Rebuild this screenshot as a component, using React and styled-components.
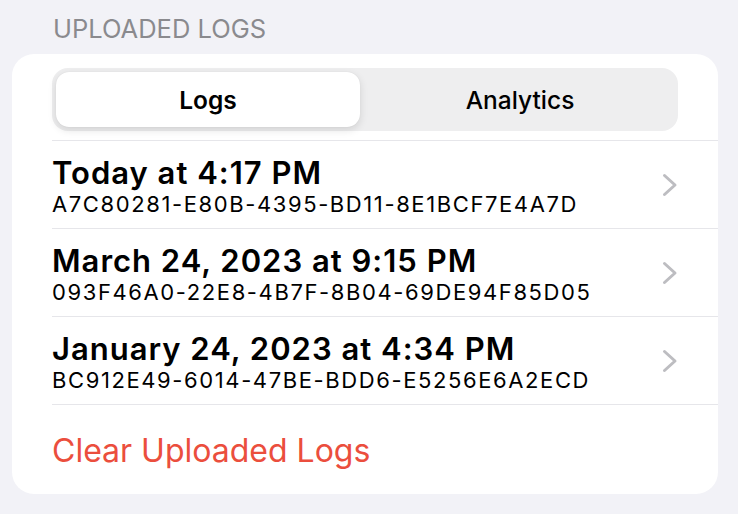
import styled, { createGlobalStyle } from "styled-components";

const GlobalStyle = createGlobalStyle`
  body {
    margin: 0;
    background: #f2f2f7;
    font-family: Inter, "Liberation Sans", sans-serif;
    -webkit-font-smoothing: antialiased;
  }
`;

const Page = styled.div`
  width: 738px;
  height: 514px;
  padding: 12px 20px 0 12px;
  box-sizing: border-box;
  overflow: hidden;
`;

const SectionHeader = styled.div`
  padding-left: 41px;
  padding-top: 2px;
  font-size: 25.5px;
  line-height: 30px;
  color: #8a8a8e;
  height: 40px;
`;

const Card = styled.div`
  background: #ffffff;
  border-radius: 22px;
  padding-top: 14px;
  padding-left: 40px;
  height: 440px;
  box-sizing: border-box;
`;

const Segmented = styled.div`
  display: flex;
  margin-right: 40px;
  height: 63px;
  padding: 4px;
  box-sizing: border-box;
  background: #eeeeef;
  border-radius: 16px;
  margin-bottom: 9px;
`;

const Segment = styled.div`
  flex: ${(p) => (p.$active ? "0 0 304px" : "1")};
  display: flex;
  align-items: center;
  justify-content: center;
  border-radius: 13px;
  font-size: 24.5px;
  font-weight: ${(p) => (p.$active ? 600 : 500)};
  color: #000;
  background: ${(p) => (p.$active ? "#fff" : "transparent")};
  box-shadow: ${(p) =>
    p.$active ? "0 3px 8px rgba(0,0,0,0.12), 0 0 1px rgba(0,0,0,0.1)" : "none"};
  padding-left: ${(p) => (p.$active ? "0" : "6px")};
`;

const Row = styled.div`
  display: flex;
  align-items: center;
  height: 88px;
  border-top: 1.5px solid #e6e6ea;
  box-sizing: border-box;
  padding-right: 40px;
`;

const RowText = styled.div`
  flex: 1;
  display: flex;
  flex-direction: column;
  padding-top: 4px;
`;

const RowTitle = styled.div`
  font-size: 31px;
  font-weight: 600;
  line-height: 34px;
  color: #000;
  letter-spacing: 1px;
`;

const RowSub = styled.div`
  font-size: 22px;
  line-height: 28px;
  color: #000;
  letter-spacing: 1.6px;
`;

const Chevron = styled.svg`
  width: 16px;
  height: 24px;
  flex: none;
`;

const ClearButton = styled.div`
  border-top: 1.5px solid #e6e6ea;
  height: 88px;
  display: flex;
  align-items: center;
  padding-top: 4px;
  box-sizing: border-box;
  font-size: 32px;
  color: #eb4e3d;
`;

const logs = [
  { title: "Today at 4:17 PM", id: "A7C80281-E80B-4395-BD11-8E1BCF7E4A7D" },
  { title: "March 24, 2023 at 9:15 PM", id: "093F46A0-22E8-4B7F-8B04-69DE94F85D05" },
  { title: "January 24, 2023 at 4:34 PM", id: "BC912E49-6014-47BE-BDD6-E5256E6A2ECD" },
];

const App = () => {
  return (
    <Page>
      <GlobalStyle />
      <SectionHeader>UPLOADED LOGS</SectionHeader>
      <Card>
        <Segmented>
          <Segment $active>Logs</Segment>
          <Segment>Analytics</Segment>
        </Segmented>
        {logs.map((log) => (
          <Row key={log.id}>
            <RowText>
              <RowTitle>{log.title}</RowTitle>
              <RowSub>{log.id}</RowSub>
            </RowText>
            <Chevron viewBox="0 0 16 24">
              <path
                d="M2.5 2.5 L13 12 L2.5 21.5"
                fill="none"
                stroke="#bdbdc1"
                strokeWidth="3"
                strokeLinecap="round"
                strokeLinejoin="round"
              />
            </Chevron>
          </Row>
        ))}
        <ClearButton>Clear Uploaded Logs</ClearButton>
      </Card>
    </Page>
  );
};

export default App;
